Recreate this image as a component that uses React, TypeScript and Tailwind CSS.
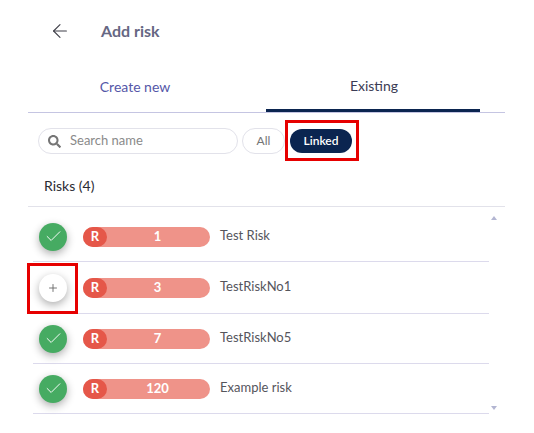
import { ArrowLeft, Check, Plus } from "lucide-react";
import { FaSearch } from "react-icons/fa";

const risks = [
  { id: 1, score: "1", name: "Test Risk", linked: true, rowClass: "h-[55px] pt-[5px]" },
  { id: 2, score: "3", name: "TestRiskNo1", linked: false, rowClass: "h-[52px] pt-[1px]" },
  { id: 3, score: "7", name: "TestRiskNo5", linked: true, rowClass: "h-[50px]" },
  { id: 4, score: "120", name: "Example risk", linked: true, rowClass: "h-[50px]" },
];

const App = () => {
  return (
    <div className="w-[534px] h-[433px] overflow-hidden bg-white font-['Lato',sans-serif]">
      <div className="h-[62px] pl-[49px] flex items-center">
        <ArrowLeft className="w-[22px] h-[22px] text-[#3f3f48]" strokeWidth={1.2} />
        <h1 className="ml-[30px] text-[16px] font-bold text-[#666783]">Add risk</h1>
      </div>

      <div className="ml-[28px] w-[477px] h-[51px] flex border-b border-[#c5c5e2]">
        <div className="w-[238px] h-[50px] flex items-center justify-center pb-[2px] pr-[24px] text-[14px] text-[#5557a8]">
          Create new
        </div>
        <div className="w-[214px] h-[50px] flex items-center justify-center pl-[2px] text-[14px] text-[#3b3c55] border-b-[3px] border-[#0b2550]">
          Existing
        </div>
      </div>

      <div className="mt-[15px] pl-[38px] flex items-center">
        <div className="w-[200px] h-[26px] pl-[9px] flex items-center gap-[9px] rounded-full border border-[#e2e2ea]">
          <FaSearch className="w-[13px] h-[13px] text-[#757575]" />
          <span className="text-[13px] text-[#8a8a8a]">Search name</span>
        </div>
        <div className="ml-[4px] w-[43px] h-[26px] flex items-center justify-center rounded-full border border-[#e2e2ea] text-[12px] text-[#757575]">
          All
        </div>
        <div className="relative ml-[5px] w-[62px] h-[24px] pb-[1px] flex items-center justify-center rounded-full bg-[#0b2550] text-[12px] font-semibold text-white">
          Linked
          <div className="absolute left-[-5px] top-[-9px] w-[74px] h-[41px] border-[3px] border-[#e60000]" />
        </div>
      </div>

      <h2 className="mt-[24px] pl-[44px] text-[14px] leading-[16px] text-[#2b2b33]">Risks (4)</h2>

      <div className="mt-[12px] ml-[28px] w-[477px] flex border-t border-[#e2e2ea]">
        <div className="ml-[5px] w-[456px]">
          {risks.map((risk) => (
            <div
              key={risk.id}
              className={`${risk.rowClass} relative flex items-center border-b border-[#dcdaec]`}
            >
              {risk.linked ? (
                <div className="ml-[6px] w-[28px] h-[28px] flex items-center justify-center rounded-full bg-[#46ab62] shadow-[0_3px_8px_rgba(0,0,0,0.32)]">
                  <Check className="w-[19px] h-[19px] text-white" strokeWidth={1.2} />
                </div>
              ) : (
                <div className="ml-[6px] w-[28px] h-[28px] flex items-center justify-center rounded-full bg-white shadow-[0_3px_8px_rgba(0,0,0,0.32)]">
                  <Plus className="w-[12px] h-[12px] text-[#666666]" strokeWidth={1.8} />
                </div>
              )}
              <div className="ml-[16px] w-[127px] h-[20px] flex items-center rounded-full bg-[#ef9389] text-white font-bold">
                <span className="w-[24px] h-[20px] flex items-center justify-center rounded-full bg-[#e55749] text-[13px]">
                  R
                </span>
                <span className="flex-1 text-center text-[13px] pr-[2px]">{risk.score}</span>
              </div>
              <span className="ml-[10px] pb-[2px] text-[13px] text-[#55555c]">{risk.name}</span>
              {!risk.linked && (
                <div className="absolute left-[-6px] top-[1px] w-[51px] h-[51px] border-[3px] border-[#e60000]" />
              )}
            </div>
          ))}
        </div>
        <div className="w-[16px] h-[203px] pl-[2px] pt-[9px] flex flex-col justify-between">
          <div className="w-0 h-0 border-x-[3px] border-b-[4px] border-x-transparent border-b-[#b3b6d2]" />
          <div className="w-0 h-0 border-x-[3px] border-t-[4px] border-x-transparent border-t-[#b3b6d2]" />
        </div>
      </div>
    </div>
  );
};

export default App;
